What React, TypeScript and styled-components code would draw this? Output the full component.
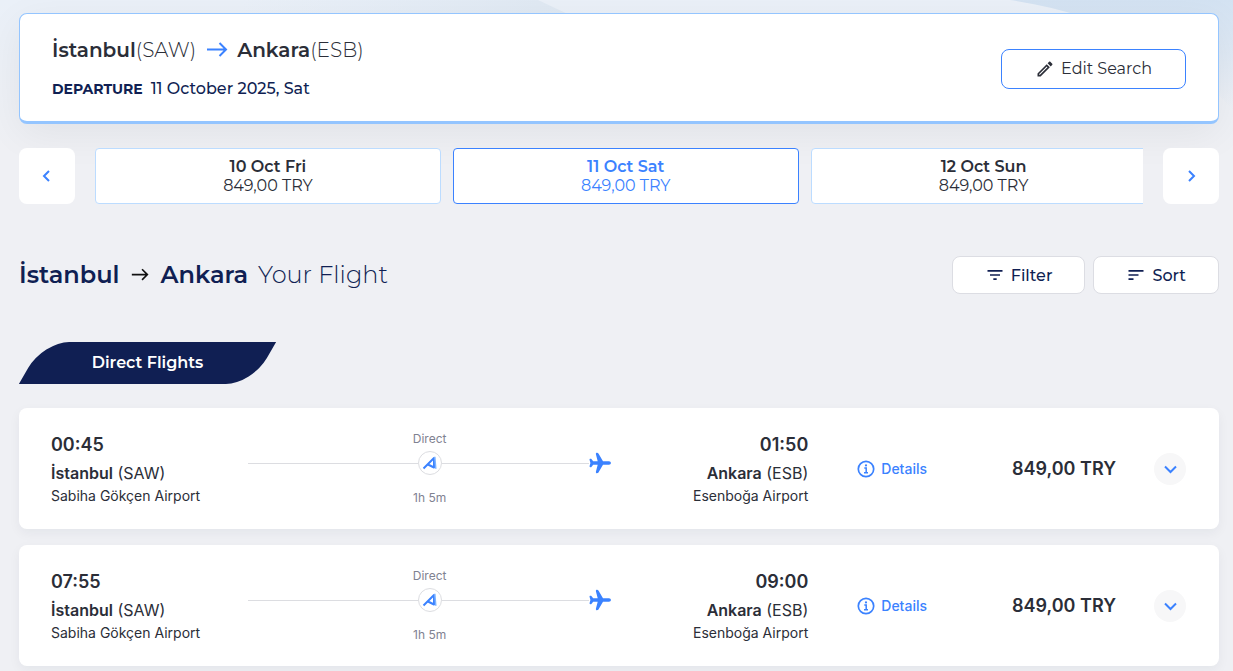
import React from 'react';
import styled, { createGlobalStyle, css } from 'styled-components';
import { MdFilterList, MdOutlineEdit, MdSort } from 'react-icons/md';

const brand = "'Montserrat', 'Inter', 'Liberation Sans', sans-serif";
const body = "'Inter', 'Liberation Sans', sans-serif";
const blue = '#3b82ff';
const navy = '#101f53';
const ink = '#2b2e38';

const GlobalStyle = createGlobalStyle`
  *, *::before, *::after { box-sizing: border-box; }
  body {
    margin: 0;
    background: #eff0f4;
    color: ${ink};
    font-family: ${body};
  }
  button { font: inherit; color: inherit; cursor: pointer; }
  h1, h2, p { margin: 0; font-weight: 400; }
`;

const Page = styled.main`
  position: relative;
  isolation: isolate;
  min-height: 100vh;
  padding: 13px 14px 5px 19px;
  overflow: hidden;
`;

const Backdrop = styled.svg`
  position: absolute;
  z-index: -1;
  top: 0;
  left: 0;
  width: 100%;
  height: 150px;
`;

const SearchCard = styled.section`
  display: flex;
  align-items: center;
  justify-content: space-between;
  padding: 22px 32px 20px;
  background: #fff;
  border: 1px solid #94c5ff;
  border-bottom-width: 3px;
  border-radius: 8px;
  box-shadow: 0 10px 40px rgba(0, 0, 0, 0.06);
  font-family: ${brand};
`;

const SearchInfo = styled.div`
  display: grid;
  gap: 13px;
`;

const SearchRoute = styled.h2`
  display: flex;
  align-items: center;
  font-size: 20px;
  line-height: 28px;
  font-weight: 300;
  strong { font-weight: 600; }
  svg { margin: 0 9px 0 10px; }
`;

const Departure = styled.p`
  display: flex;
  gap: 8px;
  color: ${navy};
  font-size: 16px;
  line-height: 24px;
  font-weight: 500;
  strong { font-size: 14px; font-weight: 700; }
`;

const OutlineButton = styled.button<{ $tone: 'primary' | 'quiet' }>`
  display: flex;
  align-items: center;
  justify-content: center;
  gap: 6px;
  padding: 0;
  background: #fff;
  border-radius: 8px;
  font-size: 16px;
  ${({ $tone }) =>
    $tone === 'primary'
      ? css`
          width: 185px;
          height: 40px;
          border: 1px solid ${blue};
        `
      : css`
          height: 38px;
          padding: 0 32px;
          border: 1px solid #dcdde3;
          color: ${navy};
          font-weight: 500;
        `}
`;

const DateStrip = styled.nav`
  display: flex;
  gap: 20px;
  margin-top: 24px;
  font-family: ${brand};
`;

const StepButton = styled.button`
  display: grid;
  place-items: center;
  flex: none;
  width: 56px;
  height: 56px;
  padding: 0;
  border: 0;
  border-radius: 8px;
  background: #fff;
`;

const Dates = styled.div`
  display: flex;
  flex: 1;
  min-width: 0;
  gap: 12px;
  overflow: hidden;
`;

const DateButton = styled.button<{ $active?: boolean }>`
  flex: 0 0 33%;
  height: 56px;
  padding: 0;
  background: #fff;
  border: 1px solid ${({ $active }) => ($active ? blue : '#bcdcff')};
  border-radius: 4px;
  color: ${({ $active }) => ($active ? blue : ink)};
  font-size: 16px;
  line-height: 19px;
  span { display: block; }
  span:first-child { font-weight: 600; }
`;

const ResultsHeader = styled.header`
  display: flex;
  align-items: center;
  justify-content: space-between;
  margin-top: 52px;
  font-family: ${brand};
`;

const Title = styled.h1`
  display: flex;
  align-items: center;
  color: ${navy};
  font-size: 24px;
  line-height: 32px;
  font-weight: 300;
  strong { font-weight: 600; }
  svg { margin: 0 11px 0 12px; }
  span { margin-left: 10px; }
`;

const Actions = styled.div`
  display: flex;
  gap: 8px;
`;

const Tab = styled.h2`
  position: relative;
  z-index: 0;
  width: 257px;
  margin-top: 48px;
  color: #fff;
  font-family: ${brand};
  font-size: 16px;
  line-height: 42px;
  font-weight: 600;
  text-align: center;
  &::before {
    content: '';
    position: absolute;
    z-index: -1;
    inset: 0 12px;
    background: ${navy};
    border-radius: 26px 0;
    transform: skewX(-30deg);
  }
`;

const FlightList = styled.div`
  display: grid;
  gap: 16px;
  margin-top: 24px;
`;

const FlightCard = styled.article`
  display: flex;
  align-items: center;
  padding: 22px 33px 22px 32px;
  background: #fff;
  border-radius: 8px;
  box-shadow: 0 4px 12px rgba(20, 30, 60, 0.05);
`;

const Stop = styled.div<{ $end?: boolean }>`
  width: 197px;
  padding-bottom: 2px;
  text-align: ${({ $end }) => ($end ? 'right' : 'left')};
`;

const Time = styled.p`
  font-size: 18px;
  line-height: 30px;
  font-weight: 600;
`;

const City = styled.p`
  font-size: 16px;
  line-height: 26px;
  strong { font-weight: 600; }
`;

const Airport = styled.p`
  font-size: 14px;
  line-height: 19px;
`;

const Path = styled.div`
  flex: 1;
  color: #7f8291;
  font-size: 12px;
  line-height: 18px;
  font-weight: 500;
  text-align: center;
`;

const Track = styled.div`
  display: flex;
  align-items: center;
  margin: 3px 0 14px;
`;

const Segment = styled.div`
  display: flex;
  flex: 1;
  align-items: center;
  &::before {
    content: '';
    flex: 1;
    height: 1px;
    background: #dcdde1;
  }
`;

const Carrier = styled.span`
  display: grid;
  place-items: center;
  width: 24px;
  height: 24px;
  border: 1px solid #dcdde1;
  border-radius: 50%;
`;

const Details = styled.button`
  display: flex;
  align-items: center;
  gap: 6px;
  margin-left: 49px;
  padding: 0;
  border: 0;
  background: none;
  color: ${blue};
  font-size: 14px;
  line-height: 20px;
  font-weight: 500;
`;

const Price = styled.p`
  width: 189px;
  font-size: 18px;
  line-height: 28px;
  font-weight: 600;
  text-align: right;
`;

const Expand = styled.button`
  display: grid;
  place-items: center;
  width: 32px;
  height: 32px;
  margin-left: 38px;
  padding: 0;
  border: 0;
  border-radius: 50%;
  background: #f7f7f8;
`;

const Arrow = ({ size, color, weight }: { size: number; color: string; weight: number }) => (
  <svg width={size} height={size} viewBox="0 0 22 22" fill="none" stroke={color} strokeWidth={weight} aria-hidden="true">
    <path d="M1 10.500h19M13.500 4 20 10.500 13.500 17" />
  </svg>
);

const chevrons = { left: 'M9 2 4 7l5 5', right: 'M5 2l5 5-5 5', down: 'M2 4.500l5.500 5.500L13 4.500' };

const Chevron = ({ to }: { to: keyof typeof chevrons }) => (
  <svg width="14" height="14" viewBox="0 0 14 14" fill="none" stroke={blue} strokeWidth="2" aria-hidden="true">
    <path d={chevrons[to]} />
  </svg>
);

const CarrierMark = () => (
  <svg width="18" height="18" viewBox="0 0 18 18" fill="none" aria-hidden="true">
    <path d="M2.500 14.500 13 4v9.500L7 10.500" stroke={blue} strokeWidth="2" strokeLinejoin="round" />
    <path d="M13.800 2.800 14.800 14.800" stroke="#7db4ff" strokeWidth="1.500" />
  </svg>
);

const Plane = () => (
  <svg width="22" height="22" viewBox="0 0 22 22" fill={blue} aria-hidden="true">
    <path d="M20 9.300h-6L9.600 1.700C9.200 1 8.700.8 8 .8c-.9 0-1.300.7-1.100 1.500l1.800 7H4.200L2.600 7.200C2.300 6.800 2 6.700 1.500 6.700c-.8 0-1.100.5-.9 1.200L1.400 11l-.8 3.100c-.2.700.1 1.200.9 1.200.5 0 .8-.1 1.100-.5l1.600-2.100h4.500l-1.800 7c-.2.800.2 1.500 1.100 1.500.7 0 1.200-.2 1.600-.9l4.400-7.600h6c1.100 0 1.900-.7 1.900-1.700S21.100 9.300 20 9.300Z" />
  </svg>
);

const Info = () => (
  <svg width="18" height="18" viewBox="0 0 18 18" fill="none" stroke={blue} aria-hidden="true">
    <circle cx="9" cy="9" r="7.700" strokeWidth="1.700" />
    <path d="M7.300 8h1.900v4.500M7 12.800h4" strokeWidth="1.500" />
    <circle cx="9" cy="5.400" r="1.100" fill={blue} stroke="none" />
  </svg>
);

const dates = [
  { day: '10 Oct Fri', price: '849,00 TRY' },
  { day: '11 Oct Sat', price: '849,00 TRY', active: true },
  { day: '12 Oct Sun', price: '849,00 TRY' },
];

const flights = [
  { departs: '00:45', arrives: '01:50' },
  { departs: '07:55', arrives: '09:00' },
];

export default function App() {
  return (
    <>
      <GlobalStyle />
      <Page>
        <Backdrop viewBox="0 0 1233 150" preserveAspectRatio="none" aria-hidden="true">
          <defs>
            <linearGradient id="sky" x1="0" y1="0" x2="0" y2="1">
              <stop offset="0" stopColor="#eaf0f8" />
              <stop offset="1" stopColor="#eff0f4" />
            </linearGradient>
            <linearGradient id="wave" x1="0" y1="0" x2="0" y2="1">
              <stop offset="0" stopColor="#d3e2f2" />
              <stop offset="1" stopColor="#d3e2f2" stopOpacity="0" />
            </linearGradient>
            <linearGradient id="ripple" x1="0" y1="0" x2="1" y2="0">
              <stop offset="0" stopColor="#dfeaf6" stopOpacity="0" />
              <stop offset="1" stopColor="#dfe8f2" />
            </linearGradient>
          </defs>
          <path d="M0 0h1233v150H0Z" fill="url(#sky)" />
          <path d="M240 0h298L572 16H240Z" fill="url(#ripple)" />
          <path d="M1010 0h223v110C1190 60 1110 14 1010 0Z" fill="url(#wave)" />
        </Backdrop>

        <SearchCard>
          <SearchInfo>
            <SearchRoute>
              <strong>İstanbul</strong>(SAW)
              <Arrow size={22} color={blue} weight={2} />
              <strong>Ankara</strong>(ESB)
            </SearchRoute>
            <Departure>
              <strong>DEPARTURE</strong> 11 October 2025, Sat
            </Departure>
          </SearchInfo>
          <OutlineButton type="button" $tone="primary">
            <MdOutlineEdit size={20} aria-hidden="true" />
            Edit Search
          </OutlineButton>
        </SearchCard>

        <DateStrip aria-label="Travel dates">
          <StepButton type="button" aria-label="Previous dates"><Chevron to="left" /></StepButton>
          <Dates>
            {dates.map(({ day, price, active }) => (
              <DateButton key={day} type="button" $active={active} aria-pressed={!!active}>
                <span>{day}</span>
                <span>{price}</span>
              </DateButton>
            ))}
          </Dates>
          <StepButton type="button" aria-label="Next dates"><Chevron to="right" /></StepButton>
        </DateStrip>

        <ResultsHeader>
          <Title>
            <strong>İstanbul</strong>
            <Arrow size={18} color="#111" weight={2} />
            <strong>Ankara</strong>
            <span>Your Flight</span>
          </Title>
          <Actions>
            <OutlineButton type="button" $tone="quiet">
              <MdFilterList size={20} aria-hidden="true" />
              Filter
            </OutlineButton>
            <OutlineButton type="button" $tone="quiet">
              <MdSort size={20} aria-hidden="true" />
              Sort
            </OutlineButton>
          </Actions>
        </ResultsHeader>

        <Tab>Direct Flights</Tab>

        <FlightList>
          {flights.map(({ departs, arrives }) => (
            <FlightCard key={departs}>
              <Stop>
                <Time>{departs}</Time>
                <City><strong>İstanbul</strong> (SAW)</City>
                <Airport>Sabiha Gökçen Airport</Airport>
              </Stop>
              <Path>
                <p>Direct</p>
                <Track>
                  <Segment />
                  <Carrier><CarrierMark /></Carrier>
                  <Segment><Plane /></Segment>
                </Track>
                <p>1h 5m</p>
              </Path>
              <Stop $end>
                <Time>{arrives}</Time>
                <City><strong>Ankara</strong> (ESB)</City>
                <Airport>Esenboğa Airport</Airport>
              </Stop>
              <Details type="button"><Info />Details</Details>
              <Price>849,00 TRY</Price>
              <Expand type="button" aria-label={`Show fares for ${departs}`}><Chevron to="down" /></Expand>
            </FlightCard>
          ))}
        </FlightList>
      </Page>
    </>
  );
}
